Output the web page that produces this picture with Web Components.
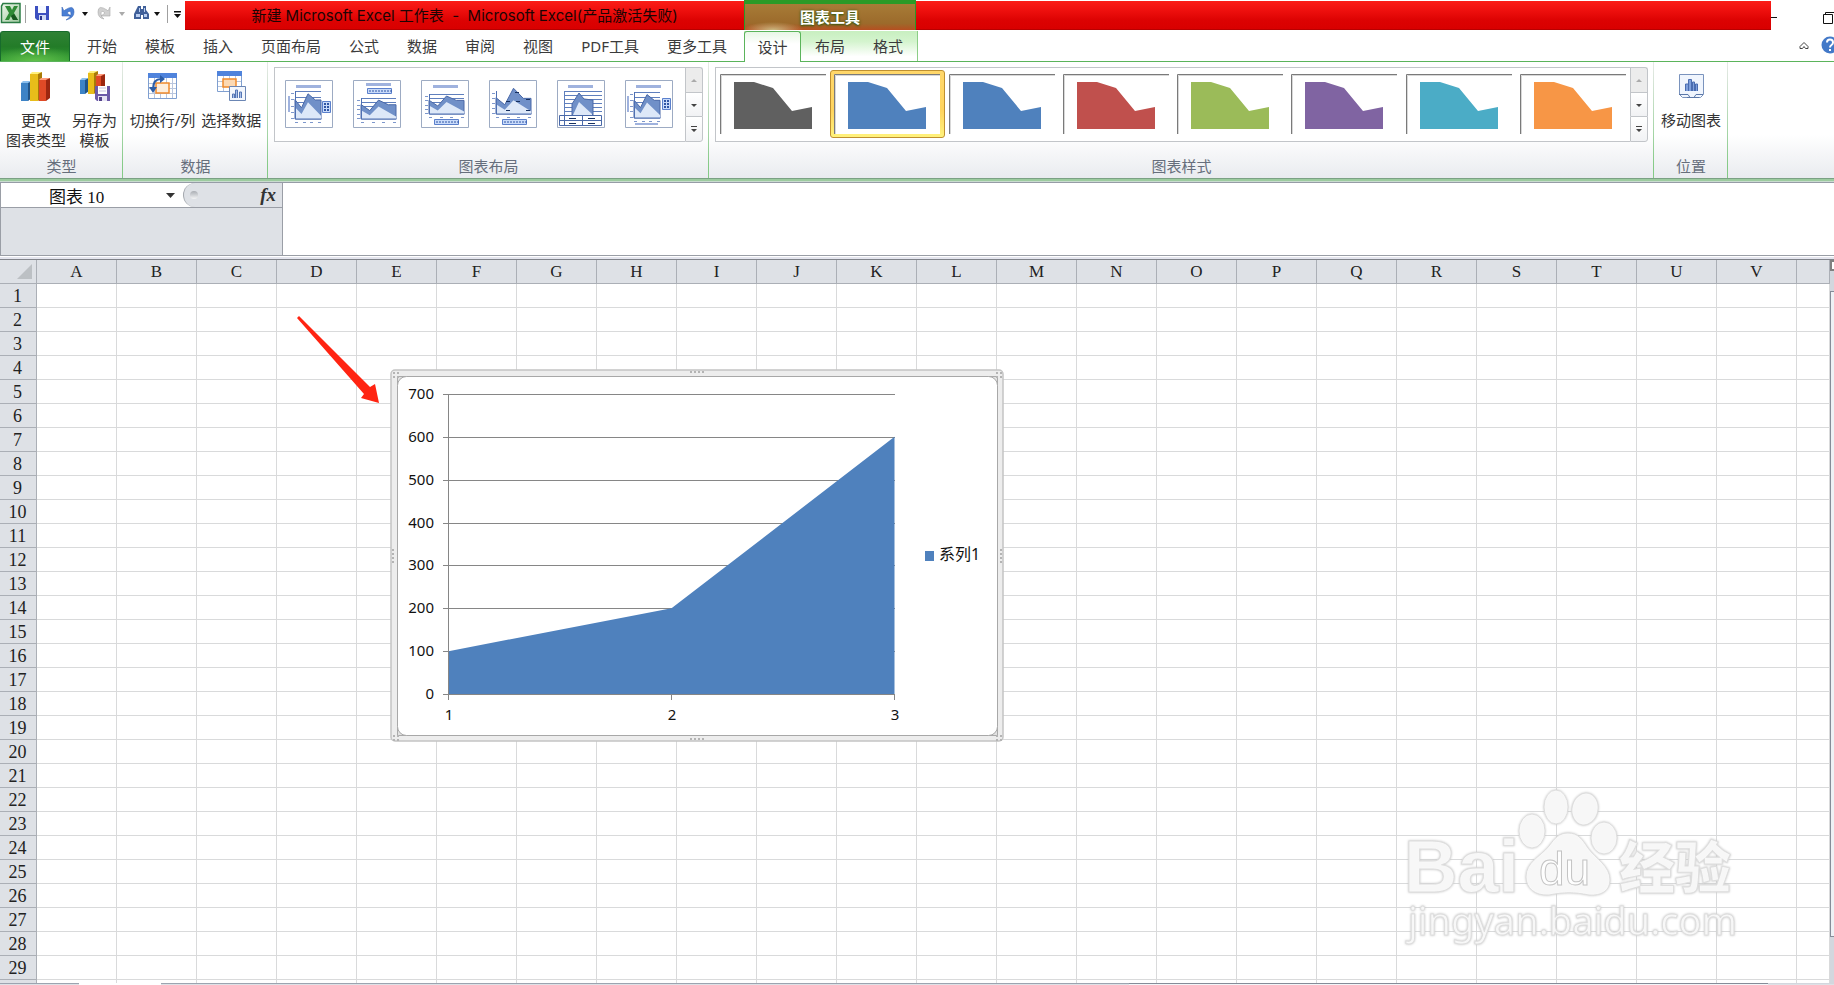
<!DOCTYPE html>
<html lang="zh-CN">
<head>
<meta charset="utf-8">
<title>新建 Microsoft Excel 工作表</title>
<style>
  html, body { height: 100%; margin: 0; }
  body { overflow: hidden; background: #fff; color: #333;
    font: 15px/20px "Noto Sans", "Noto Sans CJK SC", sans-serif; }
</style>
</head>
<body>
<xl-app>
  <xl-title-bar heading="新建 Microsoft Excel 工作表 - Microsoft Excel(产品激活失败)" context="图表工具"></xl-title-bar>
  <xl-tab-row></xl-tab-row>
  <xl-ribbon>
    <xl-group label="类型" style="--w:123px">
      <xl-command icon="change">更改<br>图表类型</xl-command>
      <xl-command icon="template">另存为<br>模板</xl-command>
    </xl-group>
    <xl-group label="数据" style="--w:145px">
      <xl-command icon="swap">切换行/列</xl-command>
      <xl-command icon="select">选择数据</xl-command>
    </xl-group>
    <xl-group label="图表布局" style="--w:441px"><xl-gallery kind="layouts"></xl-gallery></xl-group>
    <xl-group label="图表样式" grow><xl-gallery kind="styles"></xl-gallery></xl-group>
    <xl-group label="位置" style="--w:74px">
      <xl-command icon="move">移动图表</xl-command>
    </xl-group>
  </xl-ribbon>
  <xl-formula-bar name="图表 10"></xl-formula-bar>
  <xl-sheet>
    <xl-chart></xl-chart>
    <xl-arrow></xl-arrow>
    <xl-watermark></xl-watermark>
  </xl-sheet>
  <xl-bottom-strip></xl-bottom-strip>
</xl-app>

<script>
const define = (name, render) => customElements.define(name, class extends HTMLElement {
  constructor() { super(); this.attachShadow({ mode: 'open' }); }
  connectedCallback() {
    this.shadowRoot.innerHTML =
      '<style>:host,*{box-sizing:border-box}svg{display:block}button{font:inherit;color:inherit;border:0;padding:0;background:none}</style>' + render(this);
  }
});

define('xl-app', () => `
<style>:host{display:flex;flex-direction:column;height:100vh}</style><slot></slot>`);

/* ---------- title bar ---------- */
define('xl-title-bar', el => `
<style>
:host{display:flex;height:31px}
.qat{flex:0 0 185px}
.red{flex:1;display:flex;margin:1px 0 0;height:29px;background:linear-gradient(#fb1d17,#f0110f 30%,#dc0202 70%,#d90000);border-bottom:1px solid #b80000;color:#1c0404}
.t{flex:0 0 559px;text-align:center;line-height:29px;white-space:pre;font-family:Inter,"Noto Sans CJK SC",sans-serif}
.ctx{flex:0 0 172px;height:30px;margin-top:-1px;border:solid #2b9a27;border-width:4px 1px 0;background:radial-gradient(ellipse 30px 8px at 28px 100%,#c9b981,transparent),linear-gradient(#a77c37,#9c6a2b 75%,#b54f20);color:#fff;font-weight:700;text-align:center;line-height:27px;text-shadow:0 0 3px #3c5a10,0 1px 2px #3c5a10}
.win{flex:0 0 63px}
</style>
<div class="qat"><svg width="185" height="30" viewBox="0 0 185 30">
<defs><linearGradient id="g" x1="0" y1="0" x2="1" y2="1"><stop offset="0" stop-color="#eef6ea"/><stop offset="1" stop-color="#9cc79c"/></linearGradient></defs>
<path d="M3 3.500h17v19H1.500V6z" fill="url(#g)" stroke="#2c7d45" stroke-width="1.500"/>
<path d="M5 6h5l2 4 2-4h4l-4 7 4 7h-5l-2-4-2 4H5l4-7z" fill="#2f8a35"/><path d="M14 14l4 6h-5l-2-4z" fill="#17571f"/>
<path d="M25.500 5v18M167.500 5v18" stroke="#a0a0a0"/>
<path d="M35 6h14v14H37l-2-2z" fill="#3c4fc0"/><path d="M38 6h8v7h-8z" fill="#f4f8ff"/><path d="M39 15h7v5h-7z" fill="#cfd9f4"/><path d="M40 16h2v4h-2z" fill="#2a348c"/>
<path d="M62 7v9h9l-4-3q4-4 4 1 0 3-5 6 8-2 8-8 0-8-9-2l-1 1z" fill="#4a7fd4" stroke="#3767b8" stroke-width=".6"/>
<path d="M110 7v9h-9l4-3q-4-4-4 1 0 3 3 5-6-1-6-7 0-8 9-2l1 1z" fill="#d0d0d0" stroke="#aaa" stroke-width=".6"/>
<path d="M82 12h6l-3 4zM154 12h6l-3 4z" fill="#111"/><path d="M119 12h6l-3 4z" fill="#aaa"/>
<path d="M174 11h7v1.500h-7zM174 14h7l-3.500 4z" fill="#111"/>
<path d="M138 6h3v3h2V6h3v4l3 4v5h-6v-4h-2v4h-7v-5z" fill="#3f5f99"/><path d="M136 14h4v3h-4zM144 14h3v3h-3zM139 8h1v4h-1zM144 8h1v4h-1z" fill="#b9cdf0"/>
</svg></div>
<div class="red"><div class="t">${el.getAttribute('heading').replace(' - ', '  -  ')}</div><div class="ctx">${el.getAttribute('context')}</div></div>
<div class="win"><svg width="63" height="31" viewBox="0 0 63 31"><path d="M0 17.500h6M52.500 14.500h9v9h-9zM54.500 14v-1.500h9" fill="none" stroke="#111"/></svg></div>`);

/* ---------- ribbon tabs ---------- */
define('xl-tab-row', () => `
<style>
:host{display:flex;height:31px;background:linear-gradient(#5bb45b,#5bb45b) 0 100%/100% 1px no-repeat;color:#3b3b3b}
button{padding:0 14px;height:30px;line-height:30px;white-space:nowrap}
.file{width:70px;margin-right:3px;color:#fff;border:1px solid #176b2c;border-bottom:0;border-radius:3px 3px 0 0;background:radial-gradient(ellipse 50px 14px at 50% 100%,#62c04a,transparent),linear-gradient(#2f8135,#237c28 50%,#2f9a33)}
.main{flex:0 0 671px;display:flex}
.ctx{display:flex;flex:0 0 172px;height:30px;background:linear-gradient(#c8efc0,#d4f4ce 35%,#fff 85%);border-right:1px solid #8bce86}
.on{flex:0 0 57px;padding:0 12px;height:31px;background:linear-gradient(#e8f7e5,#fff 40%);border:1px solid #5bb45b;border-bottom:0;border-radius:3px 3px 0 0}
.end{flex:1;display:flex;justify-content:flex-end}
</style>
<button class="file">文件</button>
<div class="main">${['开始','模板','插入','页面布局','公式','数据','审阅','视图','PDF工具','更多工具'].map(t => `<button>${t}</button>`).join('')}</div>
<div class="ctx"><button class="on">设计</button><button>布局</button><button>格式</button></div>
<div class="end"><svg width="36" height="30" viewBox="0 0 36 30"><path d="M2 17.500v-2l4-4 4 4v2H7.500L6 15.500l-1.500 2z" fill="none" stroke="#444"/><circle cx="32" cy="14" r="8.500" fill="#4379c8"/><path d="M29 11.500q0-3 3-3t3 3q0 1.500-1.500 2.500T32 16.500M32 18v2" fill="none" stroke="#fff" stroke-width="2"/></svg></div>`);

/* ---------- ribbon ---------- */
define('xl-ribbon', () => `
<style>:host{display:flex;height:121px;padding:0 106px 5px 0;
background:linear-gradient(#7ba184 1px,#9ccb9f 1px 3px,#c9dccf 3px 4px,#969ca6 4px) 0 100%/100% 5px no-repeat,linear-gradient(#fff,#fff 60%,#e9ebef 96%)}</style><slot></slot>`);

define('xl-group', el => `
<style>
:host{display:flex;flex-direction:column;flex:0 0 var(--w);padding-top:5px;background:linear-gradient(#e8eae8,#84ca86 90%) 100% 0/1px 100% no-repeat;min-width:0}
:host([grow]){flex:1}
.c{height:89px;display:flex;justify-content:center}
.l{text-align:center;color:#666e7c}
</style><div class="c"><slot></slot></div><div class="l">${el.getAttribute('label')}</div>`);

const bar = (x, y, w, h, c1, c2, c3) =>
  `<path d="M${x} ${y + 2}l2-2h${w}l-2 2z" fill="${c1}"/><path d="M${x} ${y + 2}h${w - 2}v${h}h-${w - 2}z" fill="${c2}"/><path d="M${x + w - 2} ${y + 2}l4-2v${h - 1}l-4 3z" fill="${c3}"/>`;
const grid = (x, y, w, h) => {
  let s = `<path d="M${x}.500 ${y}.500h${w}v${h}h-${w}z" fill="#fff" stroke="#7f9fd0"/><path d="M${x} ${y}h${w + 1}v5h-${w + 1}z" fill="#4f83dc"/>`;
  for (let j = 10; j < h; j += 5) s += `<path d="M${x + 1} ${y + j}.500h${w - 1}" stroke="#b9c6de"/>`;
  for (let i = 6; i < w; i += 6) s += `<path d="M${x + i}.500 ${y + 5}v${h - 5}" stroke="#b9c6de"/>`;
  return s;
};
const mini = (x, y) => `<path d="M${x}.500 ${y}.500h16v14h-16z" fill="#f3f7fd" stroke="#6b86b4"/><path d="M${x + 3}.500 ${y + 12}v-4h2v4M${x + 6}.500 ${y + 12}v-8h2v8M${x + 10}.500 ${y + 12}v-6h2v6" fill="#a8c0ea" stroke="#5576b5"/>`;
const icons = {
  change: bar(1,11,9,18,'#8cc0ee','#3d83c6','#215488') + bar(10,2,10,27,'#fff07c','#e8bd1a','#a87a08') + bar(19,8,9,21,'#ff9c7c','#e04a26','#9c2710'),
  template: bar(1,8,7,14,'#8cc0ee','#3d83c6','#215488') + bar(9,1,8,21,'#fff07c','#e8bd1a','#a87a08') + bar(17,4,7,18,'#ff9c7c','#e04a26','#9c2710') +
    '<path d="M16 16h15v15H18l-2-2z" fill="#6c5aa8"/><path d="M19 16h9v8h-9z" fill="#fff"/><path d="M20 18h7M20 21h7" stroke="#c9c3e0"/><path d="M19 26h9v5h-9z" fill="#e6e2f4"/><path d="M20 27h3v4h-3z" fill="#54448a"/>',
  swap: grid(2,3,28,25) + '<path d="M10 13h13v10H10z" fill="#fdeedd" stroke="#ef8b2c" stroke-width="1.500"/><path d="M7 19q0-10 8-10" fill="none" stroke="#2d5ea8" stroke-width="2"/><path d="M3 17h8l-4 6zM14 5v8l5-4z" fill="#2d5ea8"/>',
  select: grid(2,1,24,20) + '<path d="M8 9h13v8H8z" fill="#fbd9b4" stroke="#ef8b2c" stroke-width="1.500"/>' + mini(14,16),
  move: '<path d="M4.500 4.500h24v20l-3 3h-18l-3-3z" fill="#f0f5fd" stroke="#7a93bd"/><path d="M4 24.500h9l2 3h4l2-3h7M12 27.500h12" fill="none" stroke="#5a77a8"/><path d="M10.500 21v-7h3v7M13.500 21V9.500h3V21M17.500 21v-9h2v9M20.500 21v-7h2v7" fill="#7fa0dc" stroke="#4a6cb0"/>'
};
define('xl-command', el => `
<style>
:host{display:block;padding:0 3px}
button{display:flex;flex-direction:column;align-items:center;white-space:nowrap;line-height:20px;color:#333}
svg{margin:3px 0 8px}
</style><button><svg width="32" height="32" viewBox="0 0 32 32">${icons[el.getAttribute('icon')]}</svg><span><slot></slot></span></button>`);

/* ---------- galleries ---------- */
const legend = (x, y, w, h) => {
  let s = `<path d="M${x}.500 ${y}.500h${w}v${h}h-${w}z" fill="#c9dbfa" stroke="#5b80cc"/>`;
  if (w > h) for (let i = 0; i < 4; i++) s += `<path d="M${x + 2 + i * 6} ${y + 3}h2m1 0h2" stroke="#2f55a4"/>`;
  else for (let i = 0; i < 3; i++) s += `<path d="M${x + 2} ${y + 3 + i * 3}h2m1 0h2" stroke="#2f55a4" stroke-width="2"/>`;
  return s;
};
const plot = (x, y, w, h, o = {}) => {
  const p = a => a.map(([u, v]) => `${x + u * w},${y + v * h}`).join(' ');
  let s = '';
  if (!o.plain) for (let i = 0; i < 4; i++) s += `<path d="M${x} ${Math.round(y + i * h / 5)}.500h${w}" stroke="#5f7fbd"/>`;
  const top = o.over ? -.12 : .1;
  s += `<polygon points="${p([[0,.3+top*.1],[.25,.6],[.5,top],[.78,.32],[1,.32],[1,1],[0,1]])}" fill="#7090c8" stroke="#4a69a8"/>`;
  s += `<polygon points="${p([[0,.58],[.25,.82],[.5,.4],[1,.88],[1,1],[0,1]])}" fill="#dde8f8"/>`;
  s += `<path d="M${x}.500 ${y}v${h}h${w}" fill="none" stroke="#4f70b2"/>`;
  for (let i = 0; i < 5; i++) s += `<path d="M${x - 4} ${Math.round(y + 2 + i * (h - 3) / 4)}.500h3" stroke="#7d97cc"/>`;
  for (let i = 0; i < 4; i++) s += `<path d="M${Math.round(x + i * (w - 3) / 3)} ${y + h + 3}.500h3" stroke="#7d97cc"/>`;
  return s;
};
const ttl = (x, y, w = 25) => `<path d="M${x} ${y}h${w}v3h-${w}z" fill="#9fb2de"/>`;
const layouts = [
  ttl(11,5) + plot(10,11,26,28) + '<path d="M3 16h2v16H3z" fill="#9fb2de"/>' + legend(37,21,8,11),
  ttl(13,3) + legend(14,8,24,5) + plot(8,18,35,21),
  ttl(12,5) + plot(8,14,35,20) + legend(13,39,24,5),
  plot(7,11,35,23,{ plain: 1, over: 1 }) + '<path d="M26 12.500h4M17 21.500h4M27 21.500h4M37 19.500h4M17 30.500h4M37 30.500h4" stroke="#17305f"/>' + legend(13,39,24,5),
  ttl(11,5) + '<path d="M7 11.500h38M7 15.500h38M7 19.500h38M7 23.500h38M7 27.500h38M7 31.500h38M7.500 11v24" stroke="#5f7fbd"/>' + '<polygon points="15,35 15,24 22,13 27,19 36,20 36,35" fill="#7090c8" stroke="#4a69a8"/><polygon points="16,35 22,22 35,34 35,35" fill="#dde8f8"/><path d="M2.500 35.500h42v10h-42zM2 40.500h42M7.500 35v10M25.500 35v10" fill="#fff" stroke="#4a69a8"/><path d="M12 38.500h7M31 38.500h7M12 43.500h7M31 43.500h7" stroke="#17305f"/>',
  ttl(11,5) + plot(9,12,26,26) + '<path d="M2 16h2v16H2z" fill="#9fb2de"/><path d="M10 43h23v2H10z" fill="#9fb2de"/>' + legend(37,18,8,11)
];
const colours = ['#606060','#4f81bd','#4f81bd','#c0504d','#9bbb59','#8064a2','#4bacc6','#f79646'];
define('xl-gallery', el => {
  const items = el.getAttribute('kind') === 'layouts'
    ? layouts.map((s, i) => `<button class="lay" aria-label="布局 ${i + 1}"><svg width="48" height="48" viewBox="0 0 48 48"><path d="M.500 .500h47v47H.500z" fill="#fff" stroke="#9dabc3"/>${s}</svg></button>`)
    : colours.map((c, i) => `<button class="sty${i === 1 ? ' on' : ''}" aria-label="样式 ${i + 1}"><svg width="106" height="60" viewBox="0 0 106 60"><path d="M0 0h99v60H0z" fill="#fff"/><path d="M0 0h106v60H0z" fill="#fff"/><path d="M.500 60V.500H106" fill="none" stroke="#7a7a7a"/><path d="M1.500 60V1.500H106" fill="none" stroke="#d8d8d8"/><path d="M14 8h20l19 6 19 23 20-4v22H14z" fill="${c}"/></svg></button>`);
  return `
<style>
:host{display:flex;flex:1;height:75px;margin:0 6px}
.items{flex:1;display:flex;border:1px solid #c2c5c9;border-right:0;background:#fff;overflow:hidden}
.lay{flex:0 0 68px;display:grid;place-items:center;height:50px;margin-top:11px}
.sty{flex:1 1 114px;display:grid;place-items:center;height:68px;margin-top:2px;border-radius:3px;overflow:hidden}
.on{border:1px solid #bf9030;background:linear-gradient(#ffd76a,#ffd45e 60%,#fff27c)}
.sc{flex:0 0 18px;display:flex;flex-direction:column}
.sc button{flex:1;border:1px solid #c2c5c9;border-bottom-width:0;display:grid;place-items:center;background:linear-gradient(#fff,#f1f2f4)}
.sc button:first-child{background:#ececec;border-radius:0 3px 0 0}
.sc button:last-child{border-bottom-width:1px;border-radius:0 0 3px 0}
</style>
<div class="items">${items.join('')}</div>
<div class="sc"><button aria-label="上一行"><svg width="8" height="8"><path d="M1 6h6L4 3z" fill="#aaa"/></svg></button><button aria-label="下一行"><svg width="8" height="8"><path d="M1 3h6L4 6z" fill="#444"/></svg></button><button aria-label="其他"><svg width="8" height="8"><path d="M1 1h6v1H1zM1 4h6L4 7z" fill="#444"/></svg></button></div>`;
});

/* ---------- formula bar ---------- */
define('xl-formula-bar', el => `
<style>
:host{display:flex;height:77px;padding-bottom:4px;background:linear-gradient(#fff 1px,#e4e5ee 1px 3px,#80838a 3px) 0 100%/100% 4px no-repeat}
.left{flex:0 0 283px;border:1px solid #9a9ea6;border-top:0;background:#dee1e6}
.row{display:flex;height:25px;border-bottom:1px solid #9a9ea6;background:#fff}
input{flex:0 0 162px;min-width:0;border:0;padding:0 0 0 48px;background:none;outline:0;color:#111;font:17px "Liberation Serif","Noto Sans CJK SC",serif}
.dd{width:20px}
.fx{flex:1;display:flex;align-items:center;justify-content:space-between;padding:0 6px;background:#dee1e6;border-left:1px solid #a4a8ae;border-radius:12px 0 0 12px}
i{width:8px;height:8px;border-radius:4px;background:linear-gradient(#a9adb3,#f4f5f6)}
.fx button{font:italic bold 19px/20px "Liberation Serif",serif;color:#333}
textarea{flex:1;min-width:0;border:0;border-bottom:1px solid #9a9ea6;resize:none;outline:0;padding:0;background:#fff}
</style>
<div class="left"><div class="row"><input aria-label="名称框" value="${el.getAttribute('name')}"><button class="dd" aria-label="展开"><svg width="20" height="24"><path d="M3 10h9l-4.500 5z" fill="#333"/></svg></button><div class="fx"><i></i><button aria-label="插入函数">fx</button></div></div></div>
<textarea aria-label="编辑栏"></textarea>`);

/* ---------- worksheet ---------- */
define('xl-sheet', () => {
  const cols = [...'ABCDEFGHIJKLMNOPQRSTUV', ''];
  const rows = [...Array(29).keys()].map(n => n + 1).concat('');
  return `
<style>
:host{display:flex;flex:1;min-height:0;position:relative;overflow:hidden}
table{flex:1;width:100%;align-self:flex-start;table-layout:fixed;border-spacing:0}
col{width:80px}col.h{width:37px}col.r{width:auto}
th{height:24px;padding:0;background:#dee1e6;border:solid #abafb6;border-width:0 1px 1px 0;font:17px/22px "Liberation Serif",serif;color:#222;overflow:hidden}
tbody th{font-size:18px;padding-right:1px}
td{height:24px;padding:0;border:solid #d9dadb;border-width:0 1px 1px 0}
th svg{margin-left:auto}
.vs{flex:0 0 4px;background:#d3d7de;padding:0 0 46px;display:flex;flex-direction:column;gap:20px}
.vs i{flex:0 0 11px;border:2px solid #808080;border-right:0;background:#fff}
.vs b{flex:1;border:1px solid #858c98;border-right:0;background:#eef1f5}
</style>
<table><colgroup><col class="h">${'<col>'.repeat(22)}<col class="r"></colgroup>
<thead><tr><th><svg width="19" height="16"><path d="M15 0v15H0z" fill="#bcc0c4"/></svg></th>${cols.map(c => `<th>${c}</th>`).join('')}</tr></thead>
<tbody>${rows.map(r => `<tr><th>${r}</th>${cols.map(() => '<td></td>').join('')}</tr>`).join('')}</tbody></table>
<div class="vs"><i></i><b></b></div><slot></slot>`;
});

/* floating chart object on the sheet */
define('xl-chart', () => {
  const y = v => 325 - v * 300 / 700;
  let s = '';
  for (let v = 0; v <= 700; v += 100) {
    const g = Math.round(y(v));
    s += `<path d="M53 ${g}.500h452" stroke="#868686"/><text x="44" y="${g + 5}" text-anchor="end">${v}</text>`;
  }
  const dots = (x, y, nx, ny) => { let d = ''; for (let i = 0; i < nx; i++) for (let j = 0; j < ny; j++) d += `<path d="M${x + i * 4} ${y + j * 4}h2v2h-2z" fill="#b4b4b4"/>`; return d; };
  return `
<style>
:host{position:absolute;left:390px;top:109px}
text{font:15px "Noto Sans","Noto Sans CJK SC",sans-serif;fill:#111}
.k{font-size:16px}
</style>
<svg width="614" height="373" viewBox="0 0 614 373" role="img" aria-label="面积图">
<rect x="1" y="1" width="612" height="371" rx="4" fill="#ededed" stroke="#c4c4c4" stroke-width="1.500"/>
<path d="M7.500 7.500h600v359H7.500z" fill="#e2e2e2" stroke="#aaa"/>
<rect x="7.500" y="7.500" width="600" height="359" rx="9" fill="#fff" stroke="#a8a8a8"/>
${dots(3,3,2,2)}${dots(606,3,2,2)}${dots(3,366,2,2)}${dots(606,366,2,2)}${dots(300,2,4,1)}${dots(300,369,4,1)}${dots(2,180,1,4)}${dots(610,180,1,4)}
${s}
<path d="M58.500 ${y(100)}L281.500 ${y(200)}L504.500 ${y(600)}V325H58.500z" fill="#4f81bd"/>
<path d="M58.500 25v306M53 325.500h452M281.500 325v6M504.500 325v6" stroke="#868686"/>
<text x="59" y="351" text-anchor="middle">1</text><text x="282" y="351" text-anchor="middle">2</text><text x="505" y="351" text-anchor="middle">3</text>
<path d="M535 182h9v10h-9z" fill="#4f81bd"/><text class="k" x="549" y="191">系列1</text>
</svg>`;
});

define('xl-arrow', () => `
<style>:host{position:absolute;left:297px;top:56px}</style>
<svg width="84" height="88"><path d="M2 0L73 71l5-3 4 19-18-5 3-4L0 2z" fill="#ff2412"/></svg>`);

define('xl-watermark', () => `
<style>
:host{position:absolute;right:84px;bottom:22px}
svg{filter:drop-shadow(0 0 1px #c4c4c4)}
text,ellipse,.p{fill:#fff;fill-opacity:.85;stroke:#dedede;stroke-width:1}
.b{font:bold 74px "Liberation Sans",sans-serif}
.d{font:46px "Liberation Sans",sans-serif;stroke:#c4c4c4}
.c{font:900 56px "Noto Sans CJK SC",sans-serif}
.u{font:38px "Noto Sans",sans-serif}
</style>
<svg width="350" height="180" viewBox="0 0 350 180" aria-hidden="true">
<text class="b" x="4" y="111">Bai</text>
<ellipse cx="132" cy="50" rx="13" ry="17"/><ellipse cx="156" cy="26" rx="12" ry="17"/><ellipse cx="185" cy="28" rx="13" ry="16" transform="rotate(12 185 28)"/><ellipse cx="204" cy="57" rx="13" ry="16"/>
<path class="p" d="M168 52c10 0 14 6 20 15 8 11 22 18 22 32 0 11-9 16-21 15-15-3-25-3-40 0-14 1-23-7-23-18 0-15 14-20 23-31 6-8 10-13 19-13z"/>
<text class="d" x="139" y="104">du</text>
<text class="c" x="219" y="107">经验</text>
<text class="u" x="8" y="154">jingyan.baidu.com</text>
</svg>`);

/* top edge of the sheet tabs and the horizontal scroll bar */
define('xl-bottom-strip', () => `
<style>
:host{display:flex;height:2px}
div{border-top:1px solid #9ca4b0;background:#dee1e6}
.a{flex:0 0 79px}.gap{flex:0 0 82px;border-color:#fff;background:#fff}.tabs{flex:0 0 968px}.h{flex:1;border-color:#858c98;background:#f3f5f8}.e{flex:0 0 66px;border-color:#d3d7de}
</style><div class="a"></div><div class="gap"></div><div class="tabs"></div><div class="h"></div><div class="e"></div>`);
</script>
</body>
</html>
